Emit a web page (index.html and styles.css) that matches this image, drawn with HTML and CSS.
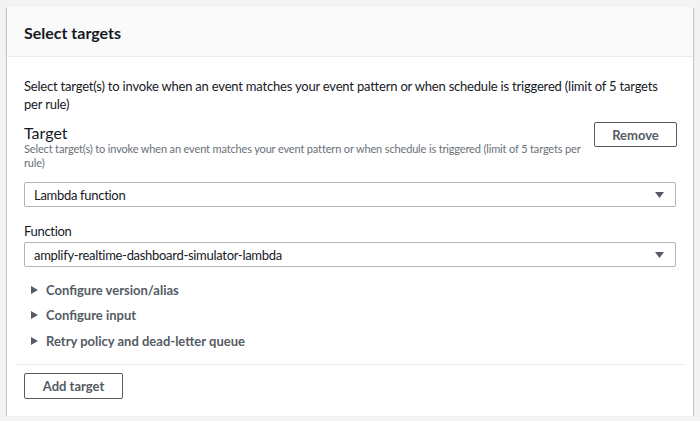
FILE: index.html
```html
<!DOCTYPE html>
<html lang="en">
<head>
<meta charset="utf-8">
<title>Select targets</title>
<link rel="stylesheet" href="styles.css">
</head>
<body>
<div class="card">
  <div class="card-header">
    <h2 class="card-title">Select targets</h2>
  </div>
  <div class="card-body">
    <p class="intro">Select target(s) to invoke when an event matches your event pattern or when schedule is triggered (limit of 5 targets per rule)</p>
    <div class="target">
      <div class="target-head">
        <div class="target-info">
          <div class="target-title">Target</div>
          <div class="hint">Select target(s) to invoke when an event matches your event pattern or when schedule is triggered (limit of 5 targets per rule)</div>
        </div>
        <button class="btn btn-remove">Remove</button>
      </div>
      <div class="select">
        <span class="select-value">Lambda function</span>
        <svg class="caret" width="9" height="6" viewBox="0 0 9 6"><polygon points="0,0 9,0 4.5,6"/></svg>
      </div>
      <div class="field-label">Function</div>
      <div class="select">
        <span class="select-value">amplify-realtime-dashboard-simulator-lambda</span>
        <svg class="caret" width="9" height="6" viewBox="0 0 9 6"><polygon points="0,0 9,0 4.5,6"/></svg>
      </div>
      <ul class="expanders">
        <li class="expander"><svg class="tri" width="7" height="8" viewBox="0 0 7 8"><polygon points="0,0 7,4 0,8"/></svg><span>Configure version/alias</span></li>
        <li class="expander"><svg class="tri" width="7" height="8" viewBox="0 0 7 8"><polygon points="0,0 7,4 0,8"/></svg><span>Configure input</span></li>
        <li class="expander"><svg class="tri" width="7" height="8" viewBox="0 0 7 8"><polygon points="0,0 7,4 0,8"/></svg><span>Retry policy and dead-letter queue</span></li>
      </ul>
    </div>
  </div>
  <div class="card-footer">
    <button class="btn btn-add">Add target</button>
  </div>
</div>
</body>
</html>
```

FILE: styles.css
```css
* { box-sizing: border-box; }

html, body {
  margin: 0;
  background: #f2f3f3;
}

body {
  padding: 7px 7px 0 7px;
  font-family: Lato, "Liberation Sans", sans-serif;
  color: #16191f;
  font-size: 13px;
}

.card {
  background: #ffffff;
  box-shadow: 0 1px 1px 0 rgba(0, 28, 36, 0.3), 1px 1px 1px 0 rgba(0, 28, 36, 0.15), -1px 1px 1px 0 rgba(0, 28, 36, 0.15);
  width: 686px;
}

.card-header {
  background: #fafafa;
  border-bottom: 1px solid #eaeded;
  padding: 15px 17px 12px;
}

.card-title {
  margin: 0;
  font-size: 16px;
  line-height: 22px;
  font-weight: 700;
}

.card-body {
  padding: 20px 17px 0;
}

.intro {
  margin: 0;
  font-size: 13px;
  line-height: 18px;
  letter-spacing: -0.2px;
}

.target {
  margin-top: 9px;
}

.target-head {
  display: flex;
  align-items: flex-start;
  justify-content: space-between;
}

.target-info {
  flex: 1;
  padding-top: 4px;
  padding-right: 10px;
}

.target-title {
  font-size: 16px;
  line-height: 14px;
}

.hint {
  margin-top: 2px;
  font-size: 11px;
  line-height: 14px;
  letter-spacing: -0.15px;
  color: #687078;
}

.btn {
  font-family: inherit;
  font-weight: 700;
  font-size: 13px;
  color: #545b64;
  background: #ffffff;
  border: 1px solid #545b64;
  border-radius: 2px;
  padding: 0;
  cursor: pointer;
}

.btn-remove {
  width: 83px;
  height: 25px;
  margin-right: -1px;
}

.select {
  margin-top: 12px;
  height: 25px;
  border: 1px solid #aab7b8;
  border-radius: 2px;
  display: flex;
  align-items: center;
  justify-content: space-between;
  padding: 0 11px 0 9px;
}

.select-value {
  font-size: 13px;
  line-height: 16px;
  letter-spacing: -0.3px;
}

.caret {
  fill: #545b64;
  display: block;
}

.field-label {
  margin-top: 16px;
  margin-bottom: 3px;
  font-size: 13px;
  line-height: 16px;
  letter-spacing: -0.3px;
}

.field-label + .select {
  margin-top: 0;
}

.expanders {
  list-style: none;
  margin: 10px 0 0;
  padding: 0 0 0 7px;
}

.expander {
  display: flex;
  align-items: center;
  height: 25.5px;
  gap: 8px;
  font-weight: 700;
  font-size: 13px;
  color: #545b64;
}

.tri {
  fill: #545b64;
  display: block;
}

.card-footer {
  margin: 10px 9px 0;
  border-top: 1px solid #eaeded;
  padding: 8px 8px 17px;
}

.btn-add {
  width: 99px;
  height: 26px;
}
```
